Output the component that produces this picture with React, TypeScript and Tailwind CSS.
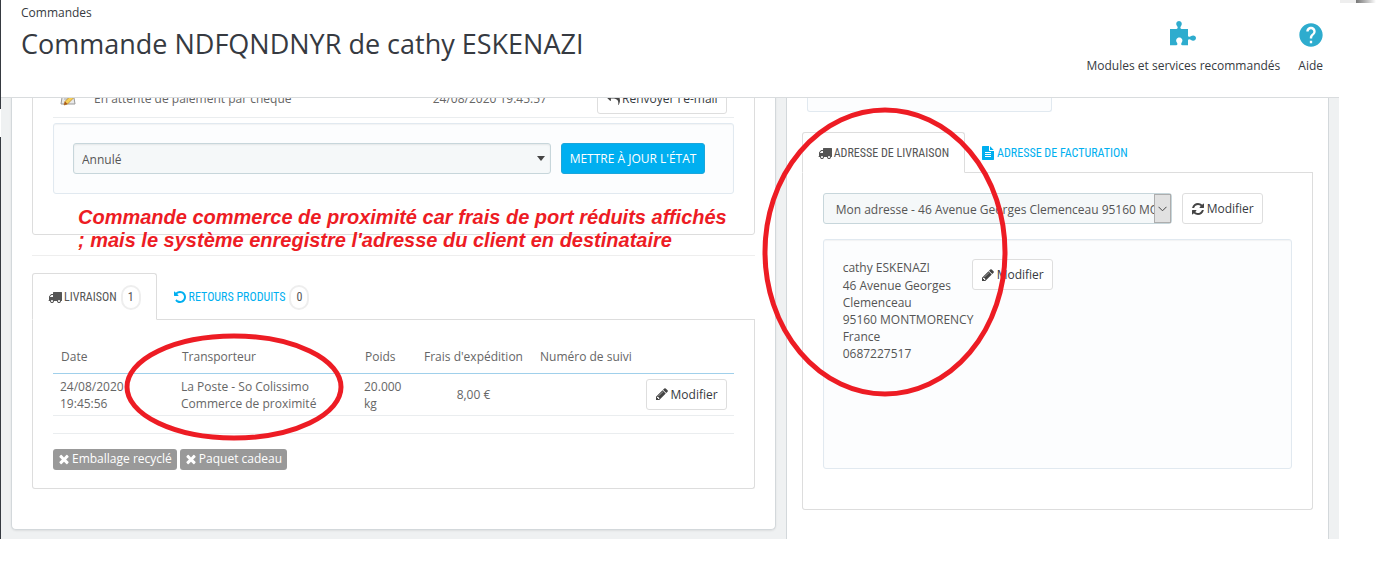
import type { ReactNode } from "react";
import { MdHelp } from "react-icons/md";

const icons = {
  truck:
    "M640 1408q0-52-38-90t-90-38-90 38-38 90 38 90 90 38 90-38 38-90zm-384-512h384v-256h-158q-13 0-22 9l-195 195q-9 9-9 22v30zm1280 512q0-52-38-90t-90-38-90 38-38 90 38 90 90 38 90-38 38-90zm256-1088v1024q0 15-4 26.5t-13.5 18.5-16.5 11.5-23.5 6-22.5 2-25.5 0-22.5-.5q0 106-75 181t-181 75-181-75-75-181h-384q0 106-75 181t-181 75-181-75-75-181h-64q-3 0-22.5.5t-25.5 0-22.5-2-23.5-6-16.5-11.5-13.5-18.5-4-26.5q0-26 19-45t45-19v-320q0-8-.5-35t0-38 2.5-34.5 6.5-37 14-30.5 22.5-30l198-198q19-19 50.5-32t58.5-13h160v-192q0-26 19-45t45-19h1024q26 0 45 19t19 45z",
  undo: "M1664 896q0 156-61 298t-164 245-245 164-298 61q-172 0-327-72.5t-264-204.5q-7-10-6.5-22.5t8.5-20.5l137-138q10-9 25-9 16 2 23 12 73 95 179 147t225 52q104 0 198.5-40.5t163.5-109.5 109.5-163.5 40.5-198.5-40.5-198.5-109.5-163.5-163.5-109.5-198.5-40.5q-98 0-188 35.5t-160 101.5l137 138q31 30 14 69-17 40-59 40h-448q-26 0-45-19t-19-45v-448q0-42 40-59 39-17 69 14l130 129q107-101 244.5-156.5t284.5-55.5q156 0 298 61t245 164 164 245 61 298z",
  pencil:
    "M491 1536l91-91-235-235-91 91v107h128v128h107zm523-928q0-22-22-22-10 0-17 7l-542 542q-7 7-7 17 0 22 22 22 10 0 17-7l542-542q7-7 7-17zm-54-192l416 416-832 832h-416v-416zm683 96q0 53-37 90l-166 166-416-416 166-165q36-38 90-38 53 0 91 38l235 234q37 39 37 91z",
  refresh:
    "M1639 1056q0 5-1 7-64 268-268 434.5t-478 166.5q-146 0-282.5-55t-243.5-157l-129 129q-19 19-45 19t-45-19-19-45v-448q0-26 19-45t45-19h448q26 0 45 19t19 45-19 45l-137 137q71 66 161 102t187 36q134 0 250-65t186-179q11-17 53-117 8-23 30-23h192q13 0 22.5 9.5t9.5 22.5zm25-800v448q0 26-19 45t-45 19h-448q-26 0-45-19t-19-45 19-45l138-138q-148-137-349-137-134 0-250 65t-186 179q-11 17-53 117-8 23-30 23h-199q-13 0-22.5-9.5t-9.5-22.5v-7q65-268 270-434.5t480-166.5q146 0 284 55.5t245 156.5l130-129q19-19 45-19t45 19 19 45z",
  times:
    "M1490 1322q0 40-28 68l-136 136q-28 28-68 28t-68-28l-294-294-294 294q-28 28-68 28t-68-28l-136-136q-28-28-28-68t28-68l294-294-294-294q-28-28-28-68t28-68l136-136q28-28 68-28t68 28l294 294 294-294q28-28 68-28t68 28l136 136q28 28 28 68t-28 68l-294 294 294 294q28 28 28 68z",
  file: "M1596 476q14 14 28 36h-472v-472q22 14 36 28zm-476 164h544v1056q0 40-28 68t-68 28h-1344q-40 0-68-28t-28-68v-1600q0-40 28-68t68-28h800v544q0 40 28 68t68 28zm160 736v-64q0-14-9-23t-23-9h-704q-14 0-23 9t-9 23v64q0 14 9 23t23 9h704q14 0 23-9t9-23zm0-256v-64q0-14-9-23t-23-9h-704q-14 0-23 9t-9 23v64q0 14 9 23t23 9h704q14 0 23-9t9-23zm0-256v-64q0-14-9-23t-23-9h-704q-14 0-23 9t-9 23v64q0 14 9 23t23 9h704q14 0 23-9t9-23z",
  reply:
    "M1792 1120q0 166-127 451-3 7-10.5 24t-13.5 30-13 22q-12 17-28 17-15 0-23.5-10t-8.5-25q0-9 2.5-26.5t2.5-23.5q5-68 5-123 0-112-19.500-200.500t-54-153.500-89-112-114-78-138-49-151.500-26-161-8h-224v256q0 26-19 45t-45 19-45-19l-512-512q-19-19-19-45t19-45l512-512q19-19 45-19t45 19 19 45v256h224q713 0 875 403 53 134 53 333z",
};

type IconName = keyof typeof icons;

function Icon({ name, className = "size-[14px]" }: { name: IconName; className?: string }) {
  return (
    <svg viewBox="0 0 1792 1792" fill="currentColor" aria-hidden="true" className={`shrink-0 ${className}`}>
      <path d={icons[name]} />
    </svg>
  );
}

function PuzzleIcon() {
  return (
    <svg viewBox="0 0 26 25" className="h-[25px] w-[26px]" fill="#2eacce" aria-hidden="true">
      <path d="M0 8h6.500C8 7.700 7.900 6.300 7.200 5.300C5.300 2.800 6.600 0 9 0s3.800 2.800 1.900 5.300C10.200 6.300 10 7.700 11.500 8H18v6.700c.3 1.500 1.700 1.300 2.700.6C23.200 13.400 26 14.700 26 17s-2.800 3.700-5.300 1.800c-1-.7-2.400-.8-2.700.7v4.800h-5.500c-1.700-.3-1.500-1.600-.9-2.600c1.900-2.500.2-5.200-2.300-5.200s-4.200 2.700-2.300 5.200c.6 1 .8 2.300-.9 2.600H0z" />
    </svg>
  );
}

function SmallButton({ icon, children }: { icon: IconName; children: ReactNode }) {
  return (
    <button
      type="button"
      className="inline-flex h-[31px] items-center gap-[2px] rounded-[3px] border border-[#dedede] bg-white px-2 whitespace-nowrap text-[#363a41]"
    >
      <Icon name={icon} className="size-[14px] text-[#444]" />
      {children}
    </button>
  );
}

function Tab({ icon, active, count, children }: { icon: IconName; active?: boolean; count?: number; children: ReactNode }) {
  return (
    <a
      href="#"
      role="tab"
      aria-selected={!!active}
      className={`-mb-px flex items-center rounded-t-[3px] border px-[15px] pt-px font-['Roboto_Condensed',Roboto,sans-serif] text-[12px] whitespace-nowrap ${
        active ? "border-[#ddd] border-b-white bg-white text-[#555]" : "border-transparent text-[#00aff0]"
      }`}
    >
      <Icon name={icon} />
      <span className="ml-[2px]">{children}</span>
      {count !== undefined && (
        <span className="ml-1 flex h-[25px] w-5 items-center justify-center rounded-full border-2 border-[#eee] text-[#555]">
          {count}
        </span>
      )}
    </a>
  );
}

function OptionLabel({ children }: { children: ReactNode }) {
  return (
    <span className="inline-flex h-[21px] items-center gap-px rounded-[3px] bg-[#999] pr-[5px] pl-1 text-white">
      <Icon name="times" />
      {children}
    </span>
  );
}

function StatusIcon() {
  return (
    <svg viewBox="0 0 16 16" className="size-4" aria-hidden="true">
      <path d="M2.500 3.500h11l1.500 9.500h-14z" fill="#e9e9e9" stroke="#999" />
      <path d="M4 6h7M4 8h6" stroke="#aaa" />
      <path d="M4 14l1-3.500 8-8 2.500 2.500-8 8z" fill="#f6cf57" stroke="#b98a2c" strokeWidth=".8" />
      <path d="M4 14l1-3.500 2.500 2.500z" fill="#a5521f" />
    </svg>
  );
}

function OrderColumn() {
  return (
    <div className="relative w-7/12 px-[5px]">
      <div className="rounded-b-[5px] border border-t-0 border-[#d3d8db] bg-white px-5 pb-10 shadow-[0_1px_2px_rgba(0,0,0,0.08)]">
        <div className="-mt-[19px] rounded-b-[3px] border border-[#ddd] px-5 pb-10">
          <table className="w-full">
            <tbody>
              <tr className="border-b border-[#eaedef]">
                <td className="w-[41px] pl-[7px]">
                  <StatusIcon />
                </td>
                <td>En attente de paiement par chèque</td>
                <td className="w-[163px]">24/08/2020 19:45:57</td>
                <td className="w-[138px] py-[3px] pr-[7px] text-right align-top">
                  <SmallButton icon="reply">Renvoyer l'e-mail</SmallButton>
                </td>
              </tr>
            </tbody>
          </table>
          <form className="mt-[5px] flex rounded-[3px] border border-[#e1e9f0] bg-[#fcfdfe] p-[19px] shadow-[inset_0_1px_1px_rgba(0,0,0,0.04)]">
            <div className="relative mr-[10px] flex-1">
              <select
                aria-label="État de la commande"
                className="h-[31px] w-full appearance-none rounded-[3px] border border-[#c7d6db] bg-[#f5f8f9] px-2 pt-[2px] text-[#555] shadow-[inset_0_1px_2px_rgba(0,0,0,0.07)]"
              >
                <option>Annulé</option>
              </select>
              <svg viewBox="0 0 8 5" className="pointer-events-none absolute top-[13px] right-[6px] h-[5px] w-2" aria-hidden="true">
                <path d="M0 0h8L4 5z" fill="#444" />
              </svg>
            </div>
            <div className="w-[153px]">
              <button type="button" className="h-[31px] rounded-[3px] border border-[#1ba6db] bg-[#00aff0] px-2 whitespace-nowrap text-white">
                METTRE À JOUR L'ÉTAT
              </button>
            </div>
          </form>
        </div>

        <hr className="mt-5 border-[#eee]" />

        <div role="tablist" className="mt-[17px] flex h-[47px] border-b border-[#ddd]">
          <Tab icon="truck" active count={1}>
            LIVRAISON
          </Tab>
          <Tab icon="undo" count={0}>
            RETOURS PRODUITS
          </Tab>
        </div>
        <div className="rounded-b-[3px] border border-t-0 border-[#ddd] px-5 pt-5 pb-[18px]">
          <table className="w-full text-left">
            <thead>
              <tr className="h-[33px] border-b border-[#a0d0eb] [&>th]:pt-[2px] [&>th]:font-normal">
                <th className="w-[121px] pl-2">Date</th>
                <th className="w-[183px] pl-2">Transporteur</th>
                <th className="w-[61px] pl-2">Poids</th>
                <th className="w-[115px] pr-1 text-center">Frais d'expédition</th>
                <th className="pl-[7px]">Numéro de suivi</th>
                <th aria-label="Actions" />
              </tr>
            </thead>
            <tbody>
              <tr className="border-b border-[#eaedef] leading-[17px]">
                <td className="pt-1 pr-8 pb-[2px] pl-[7px]">24/08/2020 19:45:56</td>
                <td className="pt-1 pr-8 pb-[2px] pl-[7px]">La Poste - So Colissimo Commerce de proximité</td>
                <td className="pt-1 pr-3 pb-[2px] pl-[7px]">20.000 kg</td>
                <td className="py-[3px] pr-1 text-center">8,00 €</td>
                <td />
                <td className="py-[5px] pr-[7px] text-right align-top">
                  <SmallButton icon="pencil">Modifier</SmallButton>
                </td>
              </tr>
            </tbody>
          </table>
          <hr className="mt-[17px] border-[#eaedef]" />
          <div className="mt-[15px] flex gap-[3px]">
            <OptionLabel>Emballage recyclé</OptionLabel>
            <OptionLabel>Paquet cadeau</OptionLabel>
          </div>
        </div>
      </div>

      <p className="absolute top-[108px] left-[72px] w-[660px] font-['Liberation_Sans',sans-serif] text-[20px] leading-[23px] font-bold text-[#ed1c24] italic">
        Commande commerce de proximité car frais de port réduits affichés
        <br />; mais le système enregistre l'adresse du client en destinataire
      </p>
      <svg viewBox="0 0 220 108" className="pointer-events-none absolute top-[235px] left-[118px] h-[108px] w-[220px]" aria-hidden="true">
        <ellipse cx="110" cy="54" rx="107" ry="51" fill="none" stroke="#ed1c24" strokeWidth="5" />
      </svg>
    </div>
  );
}

function CustomerColumn() {
  return (
    <div className="relative flex w-5/12 px-[5px]">
      <div className="w-full border-x border-[#d3d8db] bg-white px-[15px]">
        <div className="ml-[5px] h-[14px] w-[245px] rounded-b-[3px] border border-t-0 border-[#e1e9f0] bg-[#fcfdfe]" />

        <div role="tablist" className="mt-5 flex h-[41px] border-b border-[#ddd]">
          <Tab icon="truck" active>
            ADRESSE DE LIVRAISON
          </Tab>
          <Tab icon="file">ADRESSE DE FACTURATION</Tab>
        </div>
        <div className="rounded-b-[3px] border border-t-0 border-[#ddd] px-5 pt-5 pb-10">
          <div className="flex gap-[10px]">
            <div className="relative w-[349px]">
              <select
                aria-label="Adresse"
                className="h-[31px] w-full appearance-none rounded-[3px] border border-[#c7d6db] bg-[#f5f8f9] pt-[2px] pr-[17px] pl-3 text-[#555]"
              >
                <option>Mon adresse - 46 Avenue Georges Clemenceau 95160 MONTMORENCY</option>
              </select>
              <span className="pointer-events-none absolute top-px right-px flex h-[29px] w-[17px] items-center justify-center border border-[#adadad] bg-[#e1e1e1]">
                <svg viewBox="0 0 9 6" className="h-[6px] w-[9px]" aria-hidden="true">
                  <path d="M.5.8l4 4 4-4" fill="none" stroke="#444" />
                </svg>
              </span>
            </div>
            <SmallButton icon="refresh">Modifier</SmallButton>
          </div>
          <div className="mt-[15px] flex min-h-[230px] items-start rounded-[3px] border border-[#e1e9f0] bg-[#fcfdfe] p-[19px] shadow-[inset_0_1px_1px_rgba(0,0,0,0.04)]">
            <address className="w-[129px] leading-[17px] whitespace-nowrap text-[#555] not-italic">
              <span className="mb-px block">cathy ESKENAZI</span>
              46 Avenue Georges
              <br />
              Clemenceau
              <br />
              95160 MONTMORENCY
              <br />
              France
              <br />
              0687227517
            </address>
            <SmallButton icon="pencil">Modifier</SmallButton>
          </div>
        </div>
      </div>
      <svg viewBox="0 0 246 290" className="pointer-events-none absolute top-[9px] -left-[19px] h-[290px] w-[246px]" aria-hidden="true">
        <ellipse cx="123" cy="145" rx="120" ry="142" fill="none" stroke="#ed1c24" strokeWidth="5" />
      </svg>
    </div>
  );
}

export default function App() {
  return (
    <div className="flex bg-white pb-[41px] font-['Open_Sans',sans-serif] text-[12px] text-[#666]">
      <div className="flex w-px flex-col">
        <div className="h-[109px] bg-[#363a41]" />
        <div className="h-7" />
        <div className="flex-1 bg-[#363a41]" />
      </div>
      <div className="min-w-0 flex-1">
        <header className="flex h-[98px] justify-between border-b border-[#d9dcde] pr-4 pl-5 text-[#363a41]">
          <div className="pt-[5px]">
            <a href="#" className="block leading-4">
              Commandes
            </a>
            <h1 className="mt-[6px] text-[27px] leading-[34px]">Commande NDFQNDNYR de cathy ESKENAZI</h1>
          </div>
          <nav className="flex gap-[18px] pt-[21px]">
            <a href="#" className="flex flex-col items-center">
              <span className="flex h-7">
                <PuzzleIcon />
              </span>
              <span className="mt-[9px] leading-4">Modules et services recommandés</span>
            </a>
            <a href="#" className="flex flex-col items-center">
              <MdHelp className="-mx-[2px] size-[28px] text-[#2eacce]" />
              <span className="mt-[9px] leading-4">Aide</span>
            </a>
          </nav>
        </header>
        <main className="flex h-[441px] overflow-hidden bg-[#eff1f2] px-[5px]">
          <OrderColumn />
          <CustomerColumn />
        </main>
      </div>
      <div className="flex h-[3px] w-[37px] pl-px">
        <div className="w-4 bg-[#eee]" />
        <div className="flex-1 bg-linear-to-r from-[#777] to-white" />
      </div>
    </div>
  );
}
